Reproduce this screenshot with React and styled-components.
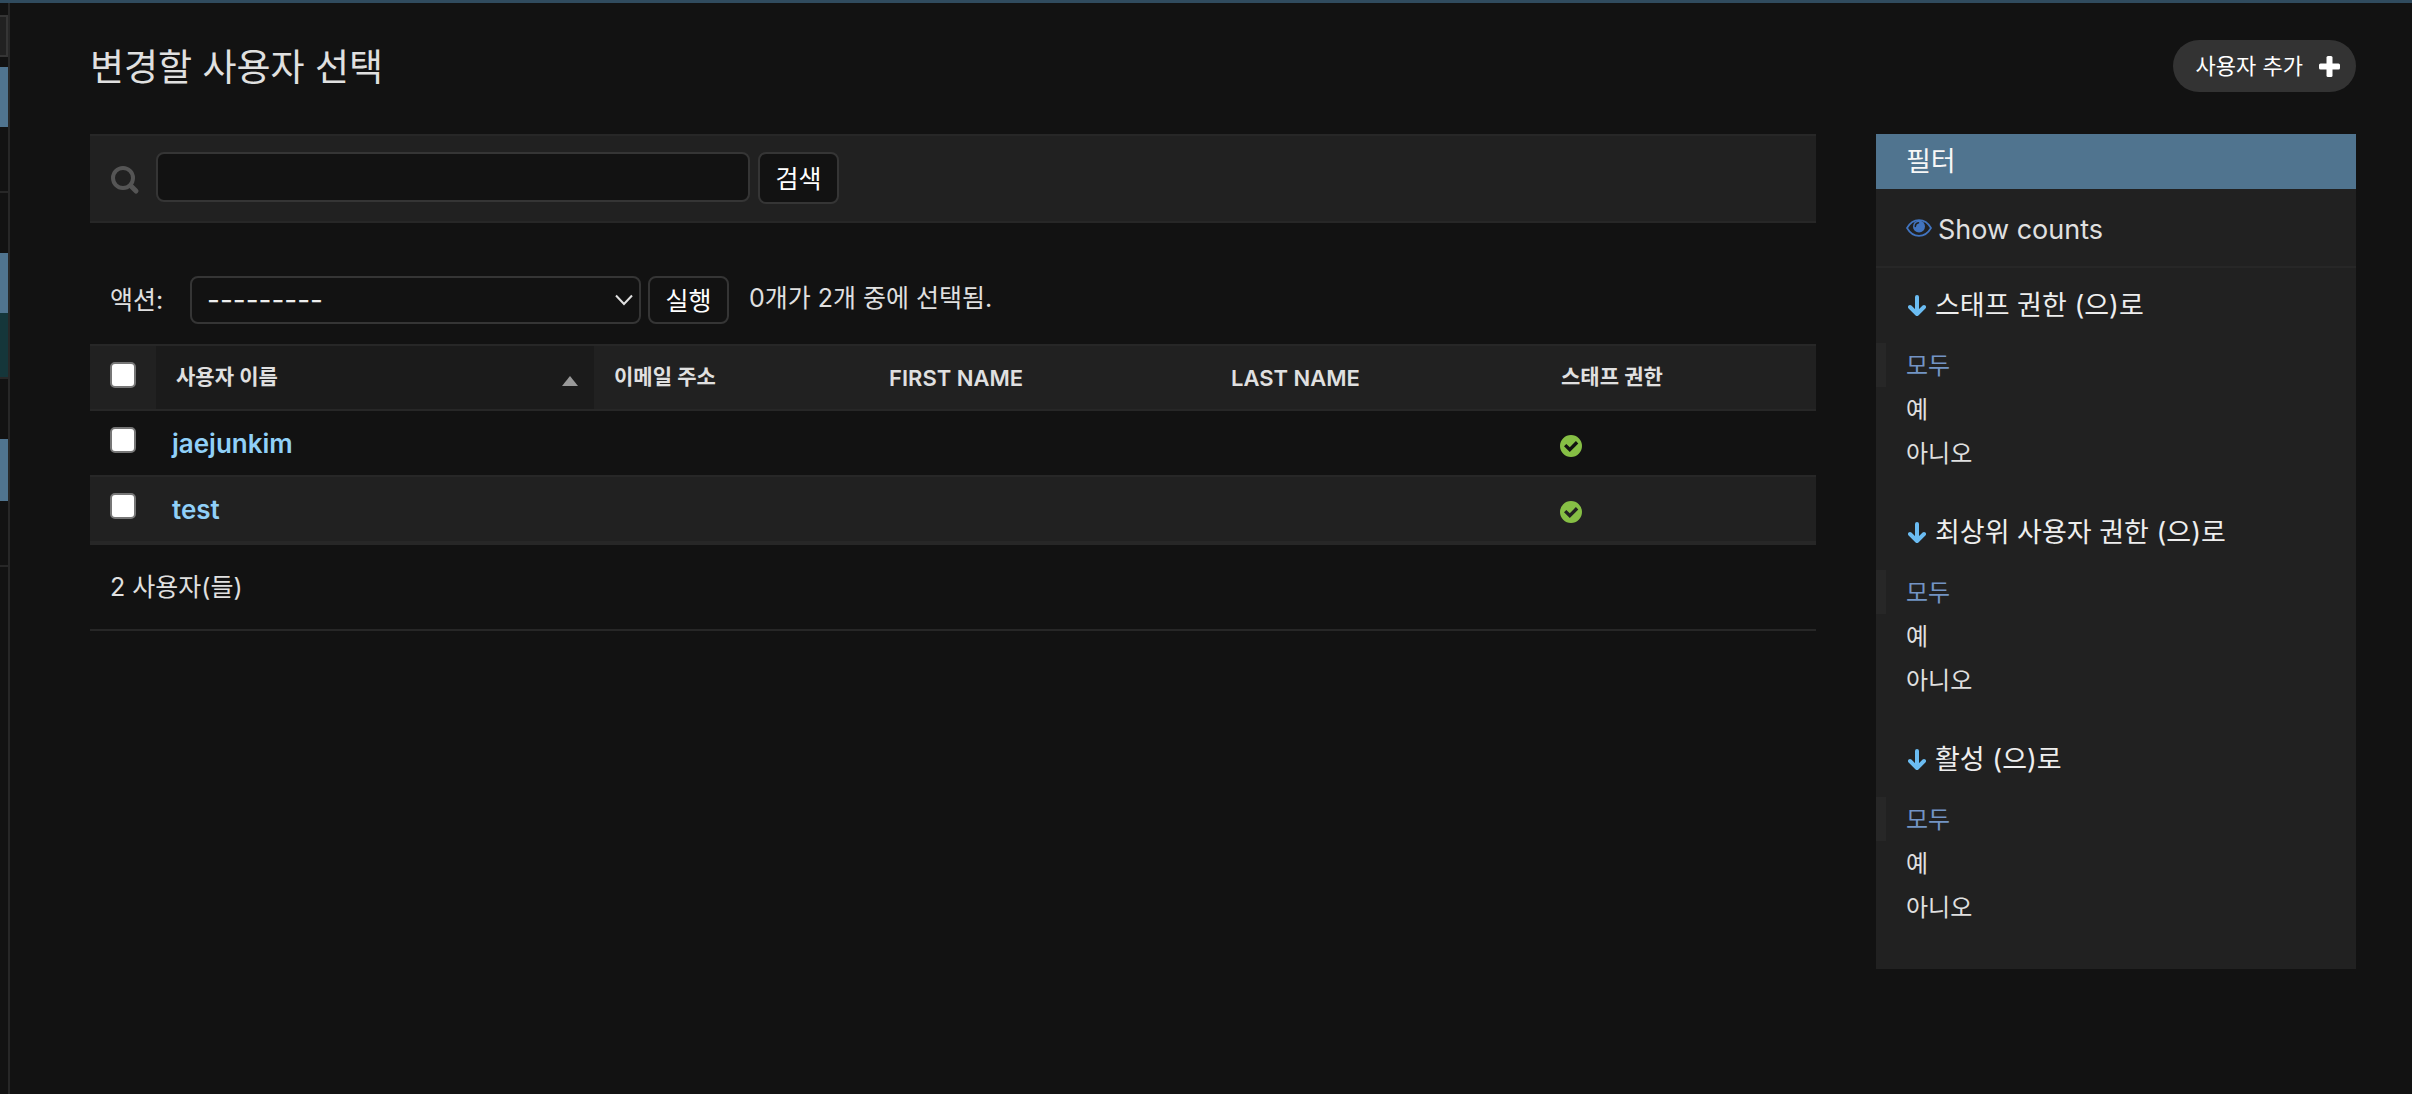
import React, { useState } from 'react';
import styled, { createGlobalStyle } from 'styled-components';

const GlobalStyle = createGlobalStyle`
  *, *::before, *::after {
    box-sizing: border-box;
  }

  body {
    margin: 0;
    background: #121212;
    color: #e0e0e0;
    font-family: Inter, "Noto Sans CJK KR", sans-serif;
    font-size: 26px;
    line-height: 40px;
  }

  button, input, select {
    font-family: inherit;
  }
`;

const Page = styled.div`
  display: flex;
  min-height: 100vh;
  border-top: 3px solid #304b5e;
`;

const NavStrip = styled.nav`
  flex: none;
  width: 10px;
  padding-top: 12px;
  border-right: 2px solid #272727;
`;

const NavFilter = styled.div`
  height: 42px;
  margin-bottom: 10px;
  background: #212121;
  border: 2px solid #353535;
  border-left: 0;
`;

const NavGroup = styled.div`
  margin-bottom: 60px;
`;

const NavCaption = styled.div`
  height: ${(props) => (props.$tall ? 62 : 60)}px;
  background: #50748f;
`;

const NavItem = styled.div`
  height: 66px;
  border-bottom: 2px solid #272727;
  background: ${(props) => (props.$current ? '#15363a' : 'transparent')};
`;

const Main = styled.main`
  flex: 1;
  min-width: 0;
  padding: 37px 56px 60px 80px;
`;

const TitleBar = styled.header`
  display: flex;
  justify-content: space-between;
  align-items: flex-start;
  height: 94px;
`;

const Title = styled.h1`
  margin: 0;
  font-size: 37px;
  font-weight: 400;
  line-height: 56px;
`;

const AddLink = styled.a`
  display: flex;
  align-items: center;
  gap: 16px;
  height: 52px;
  padding: 0 16px 0 23px;
  border-radius: 26px;
  background: #333333;
  color: #ffffff;
  font-size: 22px;
  text-decoration: none;
`;

const Columns = styled.div`
  display: flex;
  align-items: flex-start;
  gap: 60px;
`;

const ChangeList = styled.section`
  flex: 1;
  min-width: 0;
`;

const Toolbar = styled.form`
  display: flex;
  align-items: flex-start;
  height: 89px;
  margin-bottom: 53px;
  padding: 16px 20px;
  background: #212121;
  border-top: 2px solid #272727;
  border-bottom: 2px solid #272727;
`;

const SearchLabel = styled.label`
  display: flex;
  width: 46px;
  padding-top: 13px;
`;

const SearchInput = styled.input`
  width: 594px;
  height: 50px;
  margin-right: 8px;
  padding: 4px 12px;
  background: #121212;
  border: 2px solid #353535;
  border-radius: 8px;
  color: #eeeeee;
  font-size: 26px;
`;

const Button = styled.button`
  width: 81px;
  height: ${(props) => props.$height}px;
  padding: 0 0 2px;
  background: #121212;
  border: 2px solid #353535;
  border-radius: 8px;
  color: #ffffff;
  font-size: 25px;
  cursor: pointer;
`;

const Actions = styled.form`
  display: flex;
  align-items: center;
  height: 48px;
  margin-bottom: 20px;
  padding-left: 20px;
`;

const ActionLabel = styled.label`
  width: 80px;
  font-size: 25px;
`;

const SelectWrap = styled.div`
  position: relative;
  width: 451px;
  margin-right: 7px;
`;

const Select = styled.select`
  display: block;
  width: 100%;
  height: 48px;
  padding: 0 15px;
  appearance: none;
  background: #121212;
  border: 2px solid #353535;
  border-radius: 8px;
  color: #eeeeee;
  font-size: 28px;
`;

const SelectArrow = styled.svg`
  position: absolute;
  top: 18px;
  right: 8px;
  pointer-events: none;
`;

const Counter = styled.span`
  padding-bottom: 4px;
  margin-left: 20px;
  font-size: 25px;
`;

const Table = styled.table`
  width: 100%;
  table-layout: fixed;
  border-collapse: separate;
  border-spacing: 0;
`;

const HeadCell = styled.th`
  height: 67px;
  padding: ${(props) => (props.$latin ? '0 20px' : '0 16px 2px 20px')};
  background: ${(props) => (props.$sorted ? '#1b1b1b' : '#212121')};
  border-top: 2px solid #272727;
  border-bottom: 2px solid #272727;
  font-size: ${(props) => (props.$latin ? 22 : 21)}px;
  font-weight: 600;
  line-height: 32px;
  text-align: left;
  text-transform: uppercase;
`;

const SortLabel = styled.div`
  display: flex;
  justify-content: space-between;
  align-items: center;

  svg {
    margin-top: 8px;
  }
`;

const Row = styled.tr`
  &:nth-child(even) {
    background: #212121;
  }
`;

const Cell = styled.td`
  height: 64px;
  padding: 2px 16px 0;
  vertical-align: middle;

  ${Row}:nth-child(even) & {
    height: 70px;
    border-top: 2px solid #272727;
    border-bottom: 4px solid #272727;
  }
`;

const CheckCell = styled(Cell)`
  padding: 0 20px 2px;
`;

const StatusCell = styled(Cell)`
  padding: 5px 19px 0;
`;

const Checkbox = styled.input`
  display: block;
  width: 26px;
  height: 26px;
  margin: 0 0 4px;
  appearance: none;
  background: #ffffff;
  border: 2px solid #767676;
  border-radius: 5px;

  &:checked {
    background: #50748f;
  }
`;

const UserLink = styled.a`
  color: #90d0f8;
  font-size: 26px;
  font-weight: 600;
  text-decoration: none;
`;

const Paginator = styled.p`
  height: 86px;
  margin: 0;
  padding-left: 20px;
  border-bottom: 2px solid #272727;
  font-size: 25px;
  line-height: 84px;
`;

const FilterPanel = styled.aside`
  flex: none;
  width: 480px;
  padding-bottom: 20px;
  background: #212121;
`;

const FilterTitle = styled.h2`
  margin: 0;
  padding: 0 30px;
  background: #50748f;
  color: #f7f7f7;
  font-size: 27px;
  font-weight: 400;
  line-height: 55px;
`;

const CountsLink = styled.a`
  display: flex;
  align-items: center;
  gap: 6px;
  height: 79px;
  padding: 4px 30px 0;
  border-bottom: 2px solid #272727;
  color: #e0e0e0;
  font-size: 27px;
  text-decoration: none;

  svg {
    margin-bottom: 4px;
  }
`;

const FilterGroup = styled.details`
  margin-bottom: 20px;
`;

const FilterSummary = styled.summary`
  display: flex;
  align-items: center;
  gap: 9px;
  height: 75px;
  padding: 0 32px;
  color: #eeeeee;
  font-size: 27px;
  list-style: none;
  cursor: pointer;
`;

const FilterList = styled.ul`
  margin: 0;
  padding: 0;
  list-style: none;
`;

const FilterItem = styled.li`
  height: 44px;
  padding-left: 20px;
  border-left: 10px solid ${(props) => (props.$selected ? '#272727' : 'transparent')};
`;

const FilterLink = styled.a`
  color: ${(props) => (props.$selected ? '#7394c4' : '#e0e0e0')};
  font-size: 24px;
  line-height: 46px;
  text-decoration: none;
`;

const SearchIcon = () => (
  <svg width="30" height="30" viewBox="0 0 30 30" fill="none" stroke="#555555" strokeLinecap="round">
    <circle cx="13" cy="13" r="10" strokeWidth="4" />
    <path d="M20.500 20.500L26 26" strokeWidth="5" />
  </svg>
);

const PlusIcon = () => (
  <svg width="21" height="21" viewBox="0 0 21 21" fill="#ffffff">
    <rect x="7.500" width="6" height="21" rx="1.500" />
    <rect y="7.500" width="21" height="6" rx="1.500" />
  </svg>
);

const EyeIcon = () => (
  <svg width="26" height="18" viewBox="0 0 26 18" fill="none">
    <path d="M1 9C7-1.500 19-1.500 25 9C19 19.500 7 19.500 1 9Z" stroke="#4174c0" strokeWidth="1.700" />
    <circle cx="13" cy="7.500" r="6" fill="#4174c0" />
    <path d="M9.300 7.500Q9.300 4.300 12.500 3.800" stroke="#212121" strokeWidth="1.500" strokeLinecap="round" />
  </svg>
);

const DownArrow = () => (
  <svg width="18" height="22" viewBox="0 0 18 22" fill="none" stroke="#6bbcf2" strokeWidth="4" strokeLinecap="round" strokeLinejoin="round">
    <path d="M9 2V18M2 12L9 19L16 12" />
  </svg>
);

const YesIcon = () => (
  <svg width="22" height="22" viewBox="0 0 22 22" role="img" aria-label="True" display="block">
    <path
      fillRule="evenodd"
      fill="#86bf45"
      d="M11 0A11 11 0 1 1 11 22A11 11 0 1 1 11 0ZM18.300 8.400L15.900 6.100L9.800 12.200L6.300 8.900L4 11.200L9.800 16.900Z"
    />
  </svg>
);

const users = ['jaejunkim', 'test'];
const filters = ['스태프 권한', '최상위 사용자 권한', '활성'];
const choices = ['모두', '예', '아니오'];

function App() {
  const [selected, setSelected] = useState([]);

  const toggle = (name) => {
    setSelected(selected.includes(name) ? selected.filter((n) => n !== name) : [...selected, name]);
  };

  const toggleAll = () => {
    setSelected(selected.length === users.length ? [] : users);
  };

  const stop = (e) => e.preventDefault();

  return (
    <>
      <GlobalStyle />
      <Page>
        <NavStrip>
          <NavFilter />
          <NavGroup>
            <NavCaption />
            <NavItem />
          </NavGroup>
          <NavGroup>
            <NavCaption />
            <NavItem $current />
          </NavGroup>
          <NavGroup>
            <NavCaption $tall />
            <NavItem />
          </NavGroup>
        </NavStrip>
        <Main>
          <TitleBar>
            <Title>변경할 사용자 선택</Title>
            <AddLink href="#add">
              사용자 추가
              <PlusIcon />
            </AddLink>
          </TitleBar>
          <Columns>
            <ChangeList>
              <Toolbar onSubmit={stop}>
                <SearchLabel htmlFor="searchbar" aria-label="검색">
                  <SearchIcon />
                </SearchLabel>
                <SearchInput type="text" id="searchbar" name="q" />
                <Button type="submit" $height={52}>검색</Button>
              </Toolbar>
              <Actions onSubmit={stop}>
                <ActionLabel htmlFor="action">액션:</ActionLabel>
                <SelectWrap>
                  <Select id="action" name="action">
                    <option value="">---------</option>
                  </Select>
                  <SelectArrow width="18" height="12" viewBox="0 0 18 12" fill="none" stroke="#e0e0e0" strokeWidth="2">
                    <path d="M1 1.500L9 10L17 1.500" />
                  </SelectArrow>
                </SelectWrap>
                <Button type="submit" $height={48}>실행</Button>
                <Counter>{selected.length}개가 2개 중에 선택됨.</Counter>
              </Actions>
              <Table>
                <colgroup>
                  <col style={{ width: '66px' }} />
                  <col style={{ width: '438px' }} />
                  <col style={{ width: '275px' }} />
                  <col style={{ width: '342px' }} />
                  <col style={{ width: '330px' }} />
                  <col />
                </colgroup>
                <thead>
                  <tr>
                    <HeadCell>
                      <Checkbox
                        type="checkbox"
                        aria-label="모두 선택"
                        checked={selected.length === users.length}
                        onChange={toggleAll}
                      />
                    </HeadCell>
                    <HeadCell $sorted>
                      <SortLabel>
                        사용자 이름
                        <svg width="16" height="10" viewBox="0 0 16 10" fill="#999999">
                          <path d="M8 0L16 10H0Z" />
                        </svg>
                      </SortLabel>
                    </HeadCell>
                    <HeadCell>이메일 주소</HeadCell>
                    <HeadCell $latin>First name</HeadCell>
                    <HeadCell $latin>Last name</HeadCell>
                    <HeadCell>스태프 권한</HeadCell>
                  </tr>
                </thead>
                <tbody>
                  {users.map((name) => (
                    <Row key={name}>
                      <CheckCell>
                        <Checkbox
                          type="checkbox"
                          aria-label={name}
                          checked={selected.includes(name)}
                          onChange={() => toggle(name)}
                        />
                      </CheckCell>
                      <Cell>
                        <UserLink href={`#${name}`}>{name}</UserLink>
                      </Cell>
                      <Cell />
                      <Cell />
                      <Cell />
                      <StatusCell>
                        <YesIcon />
                      </StatusCell>
                    </Row>
                  ))}
                </tbody>
              </Table>
              <Paginator>2 사용자(들)</Paginator>
            </ChangeList>
            <FilterPanel>
              <FilterTitle>필터</FilterTitle>
              <CountsLink href="#counts">
                <EyeIcon />
                Show counts
              </CountsLink>
              {filters.map((title) => (
                <FilterGroup key={title} open>
                  <FilterSummary>
                    <DownArrow />
                    {title} (으)로
                  </FilterSummary>
                  <FilterList>
                    {choices.map((choice, i) => (
                      <FilterItem key={choice} $selected={i === 0}>
                        <FilterLink href="#filter" $selected={i === 0}>{choice}</FilterLink>
                      </FilterItem>
                    ))}
                  </FilterList>
                </FilterGroup>
              ))}
            </FilterPanel>
          </Columns>
        </Main>
      </Page>
    </>
  );
}

export default App;
